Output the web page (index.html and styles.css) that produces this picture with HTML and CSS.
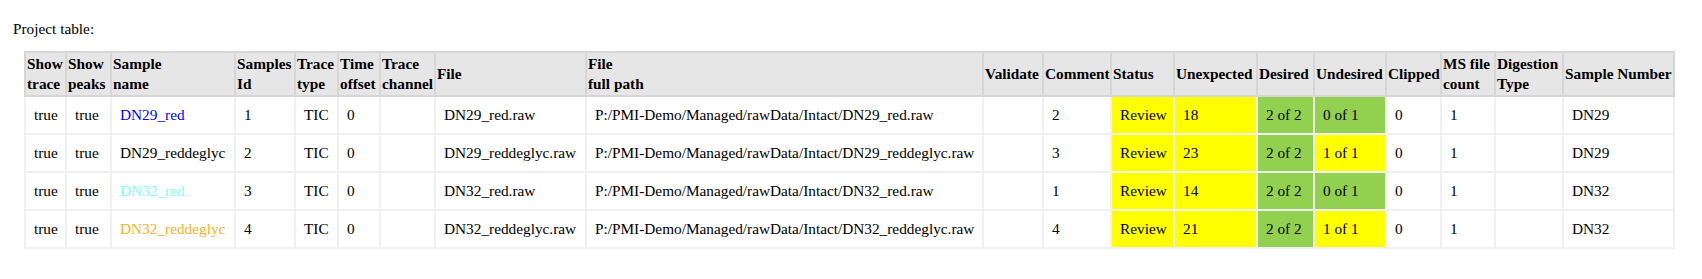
FILE: index.html
```html
<!DOCTYPE html>
<html>
<head>
<meta charset="utf-8">
<link rel="stylesheet" href="styles.css">
</head>
<body>
<div class="page">
  <p class="caption">Project table:</p>
  <table class="project">
    <colgroup>
      <col class="col-show-trace">
      <col class="col-show-peaks">
      <col class="col-sample-name">
      <col class="col-sample-id">
      <col class="col-trace-type">
      <col class="col-time-offset">
      <col class="col-trace-channel">
      <col class="col-file">
      <col class="col-full-path">
      <col class="col-validate">
      <col class="col-comment">
      <col class="col-status">
      <col class="col-unexpected">
      <col class="col-desired">
      <col class="col-undesired">
      <col class="col-clipped">
      <col class="col-ms-count">
      <col class="col-digestion">
      <col class="col-sample-number">
    </colgroup>
    <thead>
      <tr>
        <th>Show<br>trace</th>
        <th>Show<br>peaks</th>
        <th>Sample<br>name</th>
        <th>Samples<br>Id</th>
        <th>Trace<br>type</th>
        <th>Time<br>offset</th>
        <th>Trace<br>channel</th>
        <th>File</th>
        <th>File<br>full path</th>
        <th>Validate</th>
        <th>Comment</th>
        <th>Status</th>
        <th>Unexpected</th>
        <th>Desired</th>
        <th>Undesired</th>
        <th>Clipped</th>
        <th>MS file<br>count</th>
        <th>Digestion<br>Type</th>
        <th>Sample Number</th>
      </tr>
    </thead>
    <tbody>
      <tr>
        <td>true</td><td>true</td><td class="c-blue">DN29_red</td><td>1</td><td>TIC</td><td>0</td><td></td>
        <td>DN29_red.raw</td><td>P:/PMI-Demo/Managed/rawData/Intact/DN29_red.raw</td><td></td><td>2</td>
        <td class="yellow">Review</td><td class="yellow">18</td><td class="green">2 of 2</td><td class="green">0 of 1</td>
        <td>0</td><td>1</td><td></td><td>DN29</td>
      </tr>
      <tr>
        <td>true</td><td>true</td><td>DN29_reddeglyc</td><td>2</td><td>TIC</td><td>0</td><td></td>
        <td>DN29_reddeglyc.raw</td><td>P:/PMI-Demo/Managed/rawData/Intact/DN29_reddeglyc.raw</td><td></td><td>3</td>
        <td class="yellow">Review</td><td class="yellow">23</td><td class="green">2 of 2</td><td class="yellow">1 of 1</td>
        <td>0</td><td>1</td><td></td><td>DN29</td>
      </tr>
      <tr>
        <td>true</td><td>true</td><td class="c-cyan">DN32_red</td><td>3</td><td>TIC</td><td>0</td><td></td>
        <td>DN32_red.raw</td><td>P:/PMI-Demo/Managed/rawData/Intact/DN32_red.raw</td><td></td><td>1</td>
        <td class="yellow">Review</td><td class="yellow">14</td><td class="green">2 of 2</td><td class="green">0 of 1</td>
        <td>0</td><td>1</td><td></td><td>DN32</td>
      </tr>
      <tr>
        <td>true</td><td>true</td><td class="c-orange">DN32_reddeglyc</td><td>4</td><td>TIC</td><td>0</td><td></td>
        <td>DN32_reddeglyc.raw</td><td>P:/PMI-Demo/Managed/rawData/Intact/DN32_reddeglyc.raw</td><td></td><td>4</td>
        <td class="yellow">Review</td><td class="yellow">21</td><td class="green">2 of 2</td><td class="yellow">1 of 1</td>
        <td>0</td><td>1</td><td></td><td>DN32</td>
      </tr>
    </tbody>
  </table>
</div>
</body>
</html>
```

FILE: styles.css
```css
html, body {
  margin: 0;
  padding: 0;
  background: #ffffff;
}

body {
  font-family: "Liberation Serif", "Times New Roman", serif;
  font-size: 15.3px;
  color: #000000;
}

.page {
  padding: 20px 0 0 13px;
}

.caption {
  margin: 0 0 14px 0;
  line-height: 17px;
}

.project {
  border-collapse: collapse;
  table-layout: fixed;
  width: 1651px;
  margin-left: 11px;
  line-height: 20px;
}

.col-show-trace { width: 41px; }
.col-show-peaks { width: 45px; }
.col-sample-name { width: 124px; }
.col-sample-id { width: 60px; }
.col-trace-type { width: 43px; }
.col-time-offset { width: 42px; }
.col-trace-channel { width: 55px; }
.col-file { width: 151px; }
.col-full-path { width: 397px; }
.col-validate { width: 60px; }
.col-comment { width: 68px; }
.col-status { width: 63px; }
.col-unexpected { width: 83px; }
.col-desired { width: 57px; }
.col-undesired { width: 72px; }
.col-clipped { width: 55px; }
.col-ms-count { width: 54px; }
.col-digestion { width: 68px; }
.col-sample-number { width: 111px; }

.project th {
  background: #e6e6e6;
  border: 2px solid #d6d6d6;
  padding: 1px 1px;
  text-align: left;
  vertical-align: middle;
  font-weight: bold;
  white-space: nowrap;
}

.project td {
  border: 2px solid #f0f0f0;
  padding: 8px 8px;
  text-align: left;
  white-space: nowrap;
  background: #ffffff;
}

.project td.yellow {
  background: #ffff00;
}

.project td.green {
  background: #92d050;
}

.c-blue { color: #0000ff; }
.c-cyan { color: #80ffff; }
.c-orange { color: #f4b32a; }
```
